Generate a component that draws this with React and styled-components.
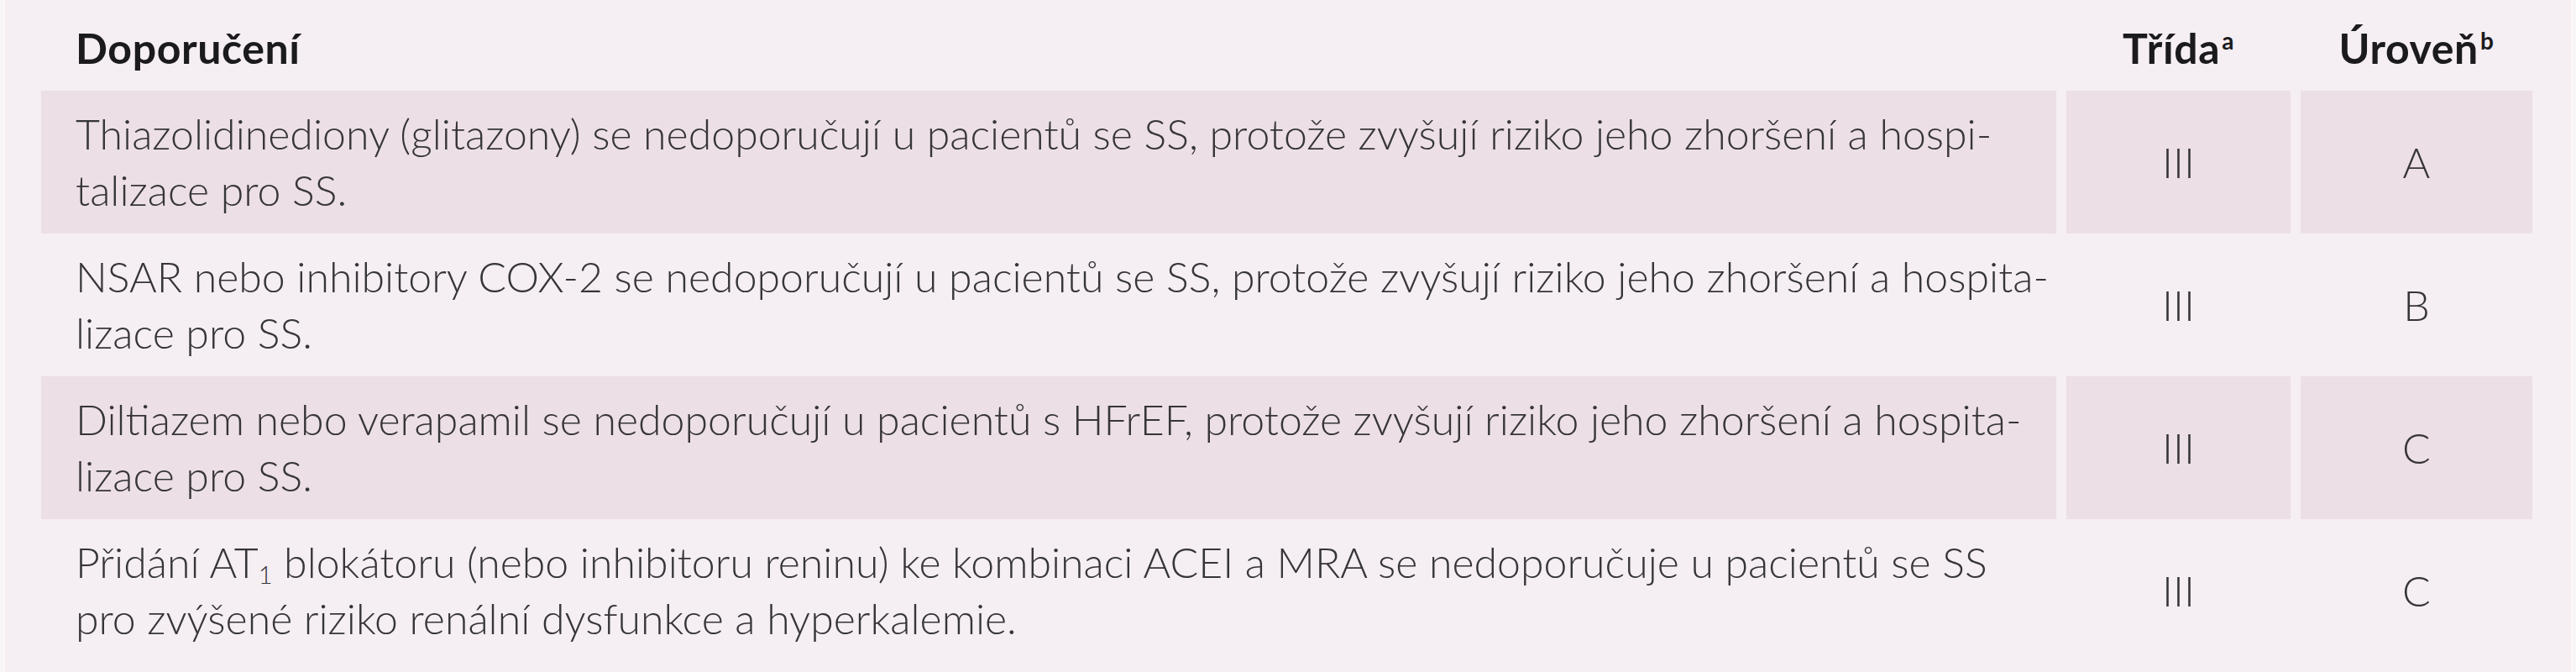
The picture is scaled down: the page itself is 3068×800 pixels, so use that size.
import React from "react";
import styled, { createGlobalStyle } from "styled-components";

const GlobalStyle = createGlobalStyle`
  html, body { margin: 0; padding: 0; background: #f9f6f7; }
  body { font-family: "Lato", "Open Sans", sans-serif; }
`;

const Page = styled.div`
  padding: 0 6px;
  width: 3068px;
  box-sizing: border-box;
`;

const Table = styled.div`
  background: #f5eef2;
  height: 800px;
  box-sizing: border-box;
  padding: 0 46px 0 43px;
  display: grid;
  grid-template-columns: 2400px 267px 276px;
  grid-template-rows: 108px repeat(4, 170px);
  column-gap: 12px;
  align-content: start;
`;

const HeaderCell = styled.div`
  padding: 27px 0 0 ${(p) => (p.$center ? "0" : "41px")};
  text-align: ${(p) => (p.$center ? "center" : "left")};
  font-size: 50px;
  line-height: 60px;
  font-weight: 700;
  letter-spacing: 0.6px;
  color: #1b1a1c;
  white-space: nowrap;
`;

const Sup = styled.sup`
  font-size: 56%;
  font-weight: 700;
  vertical-align: 0.62em;
  line-height: 0;
  margin-left: 2px;
`;

const Cell = styled.div`
  background: ${(p) => (p.$shaded ? "#ecdfe6" : "transparent")};
  display: flex;
  align-items: center;
  justify-content: ${(p) => (p.$center ? "center" : "flex-start")};
  padding-left: ${(p) => (p.$center ? "0" : "41px")};
  font-size: 50px;
  line-height: 67px;
  font-weight: 300;
  color: #363539;
  white-space: nowrap;
`;

const Sub = styled.sub`
  font-size: 58%;
  vertical-align: -0.25em;
  line-height: 0;
`;

const rows = [
  {
    lines: [
      "Thiazolidinediony (glitazony) se nedoporučují u pacientů se SS, protože zvyšují riziko jeho zhoršení a hospi-",
      "talizace pro SS.",
    ],
    cls: "III",
    lvl: "A",
  },
  {
    lines: [
      "NSAR nebo inhibitory COX-2 se nedoporučují u pacientů se SS, protože zvyšují riziko jeho zhoršení a hospita-",
      "lizace pro SS.",
    ],
    cls: "III",
    lvl: "B",
  },
  {
    lines: [
      "Diltiazem nebo verapamil se nedoporučují u pacientů s HFrEF, protože zvyšují riziko jeho zhoršení a hospita-",
      "lizace pro SS.",
    ],
    cls: "III",
    lvl: "C",
  },
  {
    lines: [
      <>
        Přidání AT<Sub>1</Sub> blokátoru (nebo inhibitoru reninu) ke kombinaci ACEI a MRA se nedoporučuje u pacientů se SS
      </>,
      "pro zvýšené riziko renální dysfunkce a hyperkalemie.",
    ],
    cls: "III",
    lvl: "C",
  },
];

export default function App() {
  return (
    <>
      <GlobalStyle />
      <Page>
        <Table>
          <HeaderCell>Doporučení</HeaderCell>
          <HeaderCell $center>
            Třída<Sup>a</Sup>
          </HeaderCell>
          <HeaderCell $center>
            Úroveň<Sup>b</Sup>
          </HeaderCell>
          {rows.map((r, i) => {
            const shaded = i % 2 === 0;
            return (
              <React.Fragment key={i}>
                <Cell $shaded={shaded}>
                  <div>
                    {r.lines[0]}
                    <br />
                    {r.lines[1]}
                  </div>
                </Cell>
                <Cell $shaded={shaded} $center>
                  {r.cls}
                </Cell>
                <Cell $shaded={shaded} $center>
                  {r.lvl}
                </Cell>
              </React.Fragment>
            );
          })}
        </Table>
      </Page>
    </>
  );
}
